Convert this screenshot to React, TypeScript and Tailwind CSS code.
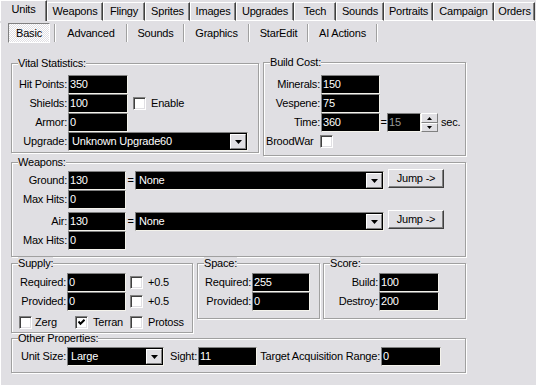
import type { ReactNode } from 'react'

const tabs: [string, string][] = [
  ['Weapons', 'w-[56px]'],
  ['Flingy', 'w-[42px]'],
  ['Sprites', 'w-[45px]'],
  ['Images', 'w-[46px]'],
  ['Upgrades', 'w-[58px]'],
  ['Tech', 'w-[42px]'],
  ['Sounds', 'w-[48px]'],
  ['Portraits', 'w-[49px]'],
  ['Campaign', 'w-[61px]'],
  ['Orders', 'w-[41px]'],
]

const subTabs: [string, string][] = [
  ['Advanced', 'w-[70px]'],
  ['Sounds', 'w-[55px]'],
  ['Graphics', 'w-[63px]'],
  ['StarEdit', 'w-[57px]'],
  ['AI Actions', 'w-[67px]'],
]

function Group({ title, className, children }: { title: string; className: string; children?: ReactNode }) {
  return (
    <div className={`border border-[#a0a0a0] shadow-[inset_1px_1px_0_#fff,1px_1px_0_#fff] shrink-0 ${className}`}>
      <div className="-mt-[7px] ml-[6px] w-fit h-[13px] bg-[#e0dfe3] leading-[13px]">{title}</div>
      {children}
    </div>
  )
}

function Row({ label, lw, children, className = '' }: { label: string; lw: string; children?: ReactNode; className?: string }) {
  return (
    <div className={`flex items-center h-[19px] ${className}`}>
      <span className={`${lw} shrink-0 text-right pr-[1px]`}>{label}</span>
      {children}
    </div>
  )
}

// sunken edit box
function Ed({ w, v, gray }: { w: string; v: string; gray?: boolean }) {
  return (
    <div
      className={`${w} h-[19px] shrink-0 bg-black border border-t-[#808080] border-l-[#808080] border-b-[#f4f3ec] border-r-[#f4f3ec] pl-[1px] flex items-center ${gray ? 'text-[#9a9a9a]' : 'text-white'}`}
    >
      {v}
    </div>
  )
}

function Tri({ up }: { up?: boolean }) {
  return (
    <svg width="7" height="4" viewBox="0 0 7 4">
      <path d={up ? 'M3.5 0 L7 4 L0 4 Z' : 'M0 0 L7 0 L3.5 4 Z'} fill="#000" />
    </svg>
  )
}

function Combo({ w, v }: { w: string; v: string }) {
  return (
    <div className={`${w} h-[19px] shrink-0 bg-black text-white border border-t-[#808080] border-l-[#808080] border-b-[#f4f3ec] border-r-[#f4f3ec] flex items-center pl-[3px]`}>
      <span className="flex-1">{v}</span>
      <div className="w-[16px] h-[15px] mr-[1px] bg-[#e0dfe3] border border-t-white border-l-white border-b-[#808080] border-r-[#808080] flex items-center justify-center">
        <Tri />
      </div>
    </div>
  )
}

function Chk({ checked }: { checked?: boolean }) {
  return (
    <div className="w-[13px] h-[13px] shrink-0 bg-white border border-t-[#808080] border-l-[#808080] border-b-white border-r-white shadow-[inset_1px_1px_0_#404040,inset_-1px_-1px_0_#e0dfe3] flex items-center justify-center">
      {checked && (
        <svg width="7" height="7" viewBox="0 0 7 7">
          <path d="M0.5 2.5 L2.5 4.8 L6.5 0.8" stroke="#000" strokeWidth="2" fill="none" />
        </svg>
      )}
    </div>
  )
}

function JumpBtn() {
  return (
    <div className="w-[56px] h-[19px] ml-[4px] mb-[4px] shrink-0 bg-[#e0dfe3] border border-t-white border-l-white border-b-[#404040] border-r-[#404040] shadow-[inset_-1px_-1px_0_#808080] flex items-center justify-center">
      Jump -&gt;
    </div>
  )
}

function Sep() {
  return <div className="w-[2px] h-[18px] shrink-0 border-l border-l-[#a0a0a0] border-r border-r-white" />
}

export default function App() {
  return (
    <div className="w-[536px] h-[385px] overflow-hidden whitespace-nowrap bg-[#e0dfe3] text-black text-[11px] leading-[13px] tracking-[-0.2px] font-['Liberation_Sans',Arial,sans-serif]">
      {/* main tabs */}
      <div className="flex h-[21px]">
        <div className="w-[47px] h-[21px] shrink-0 border-l border-t border-white border-r border-r-[#404040] shadow-[inset_-1px_0_0_#808080] flex justify-center pt-[2px]">
          Units
        </div>
        {tabs.map(([t, w]) => (
          <div
            key={t}
            className={`${w} h-[19px] mt-[2px] shrink-0 border-l border-t border-b border-white border-r border-r-[#404040] shadow-[inset_-1px_0_0_#808080] flex justify-center pt-[2px]`}
          >
            {t}
          </div>
        ))}
        <div className="flex-1 h-[19px] mt-[2px] border-b border-white" />
      </div>

      <div className="h-[364px] border-l border-white">
        {/* sub tabs */}
        <div className="flex items-center h-[20px] mt-[2px] ml-[7px]">
          <div className="w-[42px] h-[20px] shrink-0 flex items-center justify-center border border-t-[#808080] border-l-[#808080] border-b-white border-r-white bg-[repeating-conic-gradient(#fff_0_25%,#e0dfe3_0_50%)] bg-[length:2px_2px]">
            Basic
          </div>
          <div className="ml-[4px]">
            <Sep />
          </div>
          {subTabs.map(([t, w]) => (
            <div key={t} className="flex items-center">
              <div className={`${w} h-[20px] flex items-center justify-center`}>{t}</div>
              <Sep />
            </div>
          ))}
        </div>

        {/* vital + build */}
        <div className="flex items-start mt-[19px] ml-[10px]">
          <Group title="Vital Statistics:" className="w-[248px] h-[90px] mt-[1px]">
            <div className="mt-[5px]">
              <Row label="Hit Points:" lw="w-[56px]">
                <Ed w="w-[60px]" v="350" />
              </Row>
              <Row label="Shields:" lw="w-[56px]">
                <Ed w="w-[60px]" v="100" />
                <div className="ml-[5px]">
                  <Chk />
                </div>
                <span className="ml-[5px]">Enable</span>
              </Row>
              <Row label="Armor:" lw="w-[56px]">
                <Ed w="w-[60px]" v="0" />
              </Row>
              <Row label="Upgrade:" lw="w-[56px]">
                <Combo w="w-[180px]" v="Unknown Upgrade60" />
              </Row>
            </div>
          </Group>

          <Group title="Build Cost:" className="w-[203px] h-[94px] ml-[4px]">
            <div className="mt-[6px]">
              <Row label="Minerals:" lw="w-[57px]">
                <Ed w="w-[59px]" v="150" />
              </Row>
              <Row label="Vespene:" lw="w-[57px]">
                <Ed w="w-[59px]" v="75" />
              </Row>
              <Row label="Time:" lw="w-[57px]">
                <Ed w="w-[59px]" v="360" />
                <span className="w-[7px] text-center">=</span>
                <Ed w="w-[34px]" v="15" gray />
                <div className="w-[17px] h-[19px] flex flex-col shrink-0">
                  <div className="h-[10px] bg-[#e0dfe3] border border-t-white border-l-white border-b-[#808080] border-r-[#808080] flex items-center justify-center">
                    <svg width="5" height="3" viewBox="0 0 5 3">
                      <path d="M2.5 0 L5 3 L0 3 Z" fill="#000" />
                    </svg>
                  </div>
                  <div className="h-[9px] bg-[#e0dfe3] border border-t-white border-l-white border-b-[#808080] border-r-[#808080] flex items-center justify-center">
                    <svg width="5" height="3" viewBox="0 0 5 3">
                      <path d="M0 0 L5 0 L2.5 3 Z" fill="#000" />
                    </svg>
                  </div>
                </div>
                <span className="ml-[3px]">sec.</span>
              </Row>
              <div className="flex items-center h-[19px] pl-[2px]">
                <span className="w-[54px] shrink-0">BroodWar</span>
                <Chk />
              </div>
            </div>
          </Group>
        </div>

        {/* weapons */}
        <Group title="Weapons:" className="w-[455px] h-[95px] ml-[10px] mt-[6px]">
          <div className="mt-[2px]">
            <Row label="Ground:" lw="w-[56px]">
              <Ed w="w-[58px]" v="130" />
              <span className="w-[9px] text-center">=</span>
              <Combo w="w-[249px]" v="None" />
              <JumpBtn />
            </Row>
            <Row label="Max Hits:" lw="w-[56px]">
              <Ed w="w-[58px]" v="0" />
            </Row>
            <Row label="Air:" lw="w-[56px]" className="mt-[3px]">
              <Ed w="w-[58px]" v="130" />
              <span className="w-[9px] text-center">=</span>
              <Combo w="w-[249px]" v="None" />
              <JumpBtn />
            </Row>
            <Row label="Max Hits:" lw="w-[56px]">
              <Ed w="w-[58px]" v="0" />
            </Row>
          </div>
        </Group>

        {/* supply / space / score */}
        <div className="flex items-start mt-[6px] ml-[10px]">
          <Group title="Supply:" className="w-[182px] h-[70px]">
            <div className="mt-[3px]">
              <Row label="Required:" lw="w-[55px]">
                <Ed w="w-[59px]" v="0" />
                <div className="ml-[4px]">
                  <Chk />
                </div>
                <span className="ml-[5px]">+0.5</span>
              </Row>
              <Row label="Provided:" lw="w-[55px]">
                <Ed w="w-[59px]" v="0" />
                <div className="ml-[4px]">
                  <Chk />
                </div>
                <span className="ml-[5px]">+0.5</span>
              </Row>
              <div className="flex items-center h-[19px] mt-[2px] pl-[7px]">
                <div className="w-[56px] flex items-center">
                  <Chk />
                  <span className="ml-[3px]">Zerg</span>
                </div>
                <div className="w-[55px] flex items-center">
                  <Chk checked />
                  <span className="ml-[5px]">Terran</span>
                </div>
                <div className="flex items-center">
                  <Chk />
                  <span className="ml-[5px]">Protoss</span>
                </div>
              </div>
            </div>
          </Group>

          <Group title="Space:" className="w-[123px] h-[56px] ml-[4px]">
            <div className="mt-[3px]">
              <Row label="Required:" lw="w-[54px]">
                <Ed w="w-[58px]" v="255" />
              </Row>
              <Row label="Provided:" lw="w-[54px]">
                <Ed w="w-[58px]" v="0" />
              </Row>
            </div>
          </Group>

          <Group title="Score:" className="w-[143px] h-[56px] ml-[3px]">
            <div className="mt-[3px]">
              <Row label="Build:" lw="w-[55px]">
                <Ed w="w-[60px]" v="100" />
              </Row>
              <Row label="Destroy:" lw="w-[55px]">
                <Ed w="w-[60px]" v="200" />
              </Row>
            </div>
          </Group>
        </div>

        {/* other properties */}
        <Group title="Other Properties:" className="w-[455px] h-[35px] ml-[10px] mt-[5px]">
          <div className="mt-[2px]">
            <Row label="Unit Size:" lw="w-[55px]">
              <Combo w="w-[97px]" v="Large" />
              <span className="ml-[6px] w-[28px] shrink-0 text-right pr-[1px]">Sight:</span>
              <Ed w="w-[59px]" v="11" />
              <span className="w-[124px] shrink-0 text-right pr-[1px]">Target Acquisition Range:</span>
              <Ed w="w-[60px]" v="0" />
            </Row>
          </div>
        </Group>
      </div>
    </div>
  )
}
